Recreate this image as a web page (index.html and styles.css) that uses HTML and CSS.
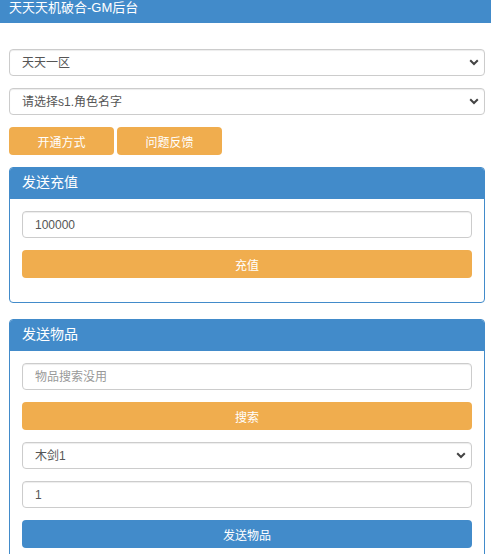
FILE: index.html
```html
<!DOCTYPE html>
<html lang="zh-CN">
<head>
    <meta charset="UTF-8">
    <meta name="viewport" content="width=device-width, initial-scale=1.0">
    <title>天天天机破合-GM后台</title>
    <link rel="stylesheet" href="styles.css">
</head>
<body>

    <header class="topbar">
        <h1>天天天机破合-GM后台</h1>
    </header>

    <main class="container">
        <div class="select-wrap">
            <select class="form-control">
                <option>天天一区</option>
            </select>
            <svg class="caret" width="10" height="7" viewBox="0 0 10 7"><path d="M1.2 1.2 L5 5 L8.8 1.2" fill="none" stroke="#444" stroke-width="2"/></svg>
        </div>

        <div class="select-wrap">
            <select class="form-control">
                <option>请选择s1.角色名字</option>
            </select>
            <svg class="caret" width="10" height="7" viewBox="0 0 10 7"><path d="M1.2 1.2 L5 5 L8.8 1.2" fill="none" stroke="#444" stroke-width="2"/></svg>
        </div>

        <div class="btn-row">
            <button class="btn btn-warning btn-small">开通方式</button>
            <button class="btn btn-warning btn-small">问题反馈</button>
        </div>

        <section class="panel">
            <div class="panel-heading">发送充值</div>
            <div class="panel-body">
                <input class="form-control" type="text" value="100000">
                <button class="btn btn-warning btn-block">充值</button>
            </div>
        </section>

        <section class="panel">
            <div class="panel-heading">发送物品</div>
            <div class="panel-body">
                <input class="form-control" type="text" placeholder="物品搜索没用">
                <button class="btn btn-warning btn-block">搜索</button>
                <div class="select-wrap">
                    <select class="form-control">
                        <option>木剑1</option>
                    </select>
                    <svg class="caret" width="10" height="7" viewBox="0 0 10 7"><path d="M1.2 1.2 L5 5 L8.8 1.2" fill="none" stroke="#444" stroke-width="2"/></svg>
                </div>
                <input class="form-control" type="text" value="1">
                <button class="btn btn-primary btn-block">发送物品</button>
            </div>
        </section>
    </main>

</body>
</html>
```

FILE: styles.css
```css
/* Global Styles */
body {
    margin: 0;
    padding: 0;
    background-color: #fff;
    color: #555;
    font-family: "Liberation Sans", "Noto Sans CJK SC", sans-serif;
    font-size: 12px;
}

.topbar {
    background-color: #428bca;
    height: 23px;
    padding: 0 9px;
}

.topbar h1 {
    margin: 0;
    color: #fff;
    font-size: 13px;
    font-weight: normal;
    line-height: 16px;
}

.container {
    padding: 26px 6px 0 9px;
}

/* Form controls */
.form-control {
    display: block;
    width: 100%;
    height: 27px;
    box-sizing: border-box;
    margin: 0 0 12px;
    padding: 0 12px;
    font-family: inherit;
    font-size: 12px;
    color: #555;
    background-color: #fff;
    border: 1px solid #ccc;
    border-radius: 4px;
    box-shadow: inset 0 1px 1px rgba(0, 0, 0, 0.075);
    appearance: none;
    -webkit-appearance: none;
    outline: none;
}

.form-control::placeholder {
    color: #999;
}

.select-wrap {
    position: relative;
}

.select-wrap .caret {
    position: absolute;
    right: 6px;
    top: 10px;
    pointer-events: none;
}

/* Buttons */
.btn {
    display: inline-block;
    height: 28px;
    padding: 0;
    border: none;
    border-radius: 4px;
    color: #fff;
    font-family: inherit;
    font-size: 12px;
    cursor: pointer;
}

.btn-warning {
    background-color: #f0ad4e;
}

.btn-primary {
    background-color: #428bca;
}

.btn-block {
    display: block;
    width: 100%;
    margin-bottom: 12px;
}

.btn-row {
    display: flex;
    gap: 3px;
    margin-bottom: 12px;
}

.btn-small {
    width: 105px;
}

/* Panels */
.panel {
    border: 1px solid #428bca;
    border-radius: 4px;
    margin-bottom: 16px;
    overflow: hidden;
}

.panel-heading {
    background-color: #428bca;
    color: #fff;
    font-size: 14px;
    height: 31px;
    line-height: 29px;
    padding: 0 12px;
}

.panel-body {
    padding: 12px;
}
```
